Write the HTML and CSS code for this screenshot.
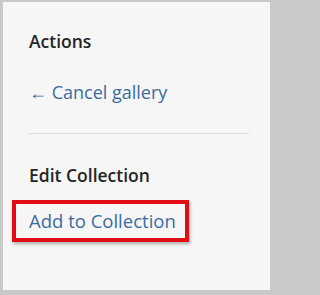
FILE: index.html
```html
<!DOCTYPE html>
<html>
<head>
<meta charset="utf-8">
<link rel="stylesheet" href="styles.css">
</head>
<body>
<div class="frame">
  <div class="panel">
    <h3 class="heading">Actions</h3>
    <a class="link cancel" href="#">← Cancel gallery</a>
    <hr class="divider">
    <h3 class="heading edit">Edit Collection</h3>
    <a class="link add" href="#">Add to Collection</a>
  </div>
</div>
</body>
</html>
```
FILE: styles.css
```css
html, body {
  margin: 0;
  padding: 0;
  background: #c9c9c9;
}
.frame {
  width: 275px;
  height: 295px;
  padding: 2px 5px 5px 3px;
  box-sizing: border-box;
}
.panel {
  height: 100%;
  background: #f6f6f6;
  padding: 27px 21px 0 26px;
  box-sizing: border-box;
  font-family: "Open Sans", "Noto Sans", sans-serif;
}
.heading {
  margin: 0;
  font-size: 17.5px;
  font-weight: 600;
  line-height: 24px;
  color: #252525;
}
.link {
  display: block;
  color: #3a6da0;
  text-decoration: none;
  font-size: 18.5px;
  line-height: 24px;
}
.cancel {
  margin-top: 27px;
  font-size: 18px;
}
.divider {
  border: 0;
  border-top: 1px solid #dcdcdc;
  margin: 29px 0 0 0;
  height: 0;
}
.edit {
  margin-top: 29px;
}
.add {
  display: inline-block;
  margin: 13px 0 0 -17px;
  padding: 5px 9px 5px 13px;
  border: 4px solid #e10d14;
  box-shadow: 1px 2px 3px rgba(0,0,0,0.3);
}
```
